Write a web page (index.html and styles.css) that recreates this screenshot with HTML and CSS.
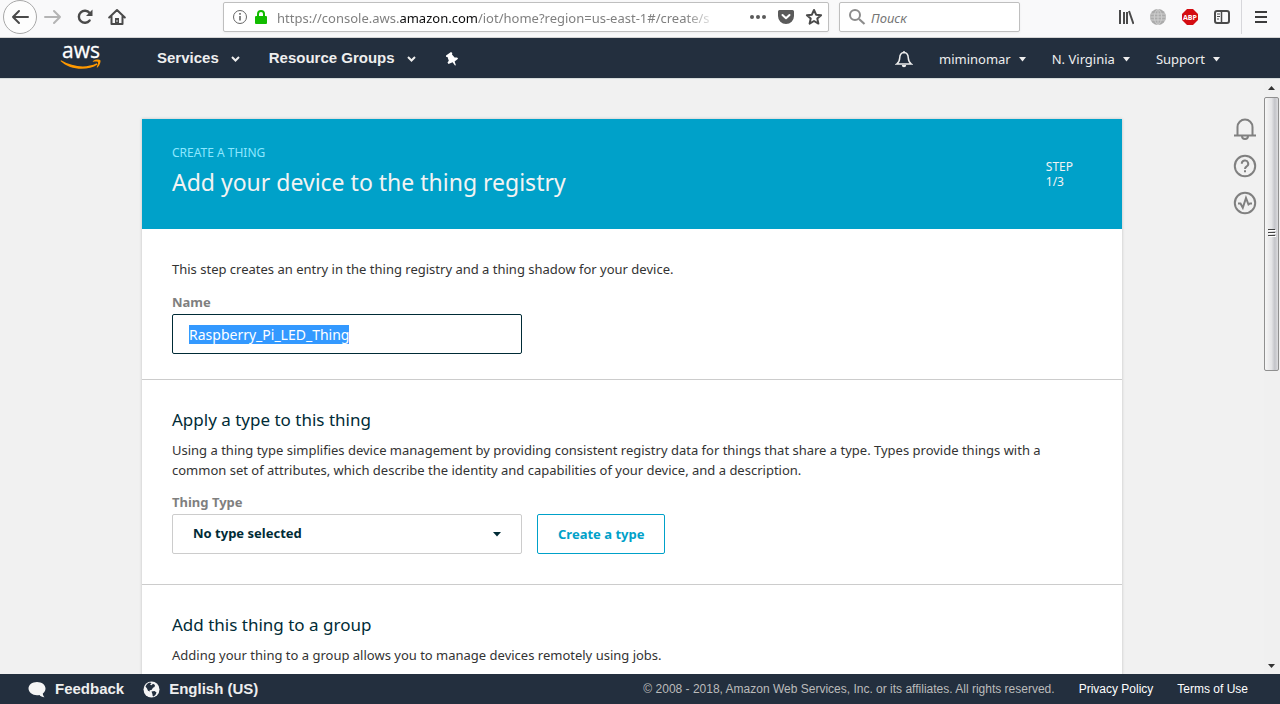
FILE: index.html
```html
<!DOCTYPE html>
<html lang="en">
<head>
<meta charset="utf-8">
<title>AWS IoT - Create a thing</title>
<link rel="stylesheet" href="styles.css">
</head>
<body>
<div class="toolbar">
  <div class="toolbar-nav">
    <button class="tool back" aria-label="Back"><svg width="18" height="18" viewBox="0 0 18 18"><path d="M17 9H2M8 3L2 9l6 6" class="stroke"/></svg></button>
    <button class="tool" aria-label="Forward"><svg width="18" height="18" viewBox="0 0 18 18"><path d="M1 9h15M10 3l6 6-6 6" class="stroke faded"/></svg></button>
    <button class="tool" aria-label="Reload"><svg width="18" height="18" viewBox="0 0 18 18"><path d="M13.6 12.4A6 6 0 1 1 13.6 5" class="stroke bold"/><path d="M16.500 1.500v6.500h-6.500z" fill="#4a4a4a"/></svg></button>
    <button class="tool" aria-label="Home"><svg width="18" height="18" viewBox="0 0 18 18"><path d="M1.200 9.500L9 2l7.800 7.500M3.500 8.500V16h11V8.500" class="stroke"/><path d="M7 16v-6h4v6z" fill="#4a4a4a"/><path d="M9 12v2" stroke="#ddd" stroke-width="1"/></svg></button>
  </div>
  <div class="urlbar">
    <svg width="16" height="16" viewBox="0 0 16 16"><circle cx="8" cy="8" r="6.500" fill="none" stroke="#666"/><path d="M8 7v4.500M8 4v1.800" stroke="#666" stroke-width="1.600"/></svg>
    <svg width="14" height="16" viewBox="0 0 14 16"><path d="M4 8V5a3 3 0 0 1 6 0v3" fill="none" stroke="#12bc00" stroke-width="2"/><rect x="1" y="7" width="12" height="8" rx="1" fill="#12bc00"/></svg>
    <div class="url" role="textbox" aria-label="Address" tabindex="0">https://console.aws.<span class="host">amazon.com</span>/iot/home?region=us-east-1#/create/s</div>
    <div class="url-actions">
      <button class="tool" aria-label="Page actions"><svg width="18" height="16" viewBox="0 0 18 16" fill="#5a5a5a"><circle cx="3" cy="8" r="2"/><circle cx="9" cy="8" r="2"/><circle cx="15" cy="8" r="2"/></svg></button>
      <button class="tool" aria-label="Save to Pocket"><svg width="18" height="16" viewBox="0 0 18 16"><path d="M2.500 1h13A1.500 1.500 0 0 1 17 2.500V7A8 8 0 0 1 1 7V2.500A1.500 1.500 0 0 1 2.500 1z" fill="#5a5a5a"/><path d="M5.500 6L9 9.300 12.500 6" fill="none" stroke="#fff" stroke-width="2" stroke-linecap="round" stroke-linejoin="round"/></svg></button>
      <button class="tool" aria-label="Bookmark"><svg width="18" height="18" viewBox="0 0 18 18"><path d="M9 2l2.100 4.700 5 .5-3.800 3.400 1.100 5L9 13l-4.400 2.600 1.100-5L1.900 7.200l5-.5z" class="stroke"/></svg></button>
    </div>
  </div>
  <label class="search">
    <svg width="18" height="18" viewBox="0 0 18 18"><circle cx="7" cy="7" r="5" fill="none" stroke="#8c8c8c" stroke-width="2"/><path d="M11 11l5.500 5" stroke="#8c8c8c" stroke-width="2.200"/></svg>
    <input type="text" placeholder="Поиск" aria-label="Поиск">
  </label>
  <div class="toolbar-end">
    <button class="tool" aria-label="Library"><svg width="16" height="16" viewBox="0 0 16 16"><path d="M2 1v14M6 3v12M9 3v12M11 2l4.500 13" stroke="#4a4a4a" stroke-width="2" fill="none"/></svg></button>
    <button class="tool" aria-label="Globe"><svg width="16" height="16" viewBox="0 0 16 16"><circle cx="8" cy="8" r="8" fill="#ababab"/><path d="M1 5h14M0 8h16M1 11h14M8 0v16M8 0c-5 4-5 12 0 16M8 0c5 4 5 12 0 16" stroke="#cfcfcf" fill="none"/></svg></button>
    <button class="tool" aria-label="Adblock Plus"><svg width="16" height="16" viewBox="0 0 16 16"><path d="M5 0h6l5 5v6l-5 5H5l-5-5V5z" fill="#d40d12"/><text x="8" y="11" class="abp">ABP</text></svg></button>
    <button class="tool" aria-label="Sidebar"><svg width="16" height="16" viewBox="0 0 16 16"><rect x="1" y="2" width="14" height="12" rx="2" fill="none" stroke="#4a4a4a" stroke-width="2"/><path d="M7.500 2v12" stroke="#4a4a4a" stroke-width="1.500"/><path d="M3 5h3M3 7.500h3M3 10h2" stroke="#4a4a4a"/></svg></button>
    <button class="tool menu" aria-label="Menu"><svg width="14" height="14" viewBox="0 0 14 14"><path d="M1 2h12M1 7h12M1 12h12" stroke="#3c3c3c" stroke-width="2"/></svg></button>
  </div>
</div>

<header class="awsbar">
  <a href="#" class="logo" aria-label="AWS home">
    <svg width="42" height="34" viewBox="0 -6 42 34"><text x="2" y="14" class="logo-text">aws</text><path d="M.5 17C10 26.500 28 27 37.500 20.500L36.800 19.300C26 24.500 13 23 1 16.300z" fill="#f90"/><path d="M32.800 17.200c3-2 6.600-1.900 7.600-1 .5 1.500-.5 5-3 7.300-.4.300-.8.100-.6-.4.700-1.700 1.600-4.300 1.200-5-.8-.700-3.300-.5-4.700-.3-.5 0-.7-.3-.5-.6z" fill="#f90"/></svg>
  </a>
  <nav class="mainnav">
    <button class="nav-main">Services <svg width="9" height="6" viewBox="0 0 9 6"><path d="M1 1l3.500 3.500L8 1" class="chev"/></svg></button>
    <button class="nav-main">Resource Groups <svg width="9" height="6" viewBox="0 0 9 6"><path d="M1 1l3.500 3.500L8 1" class="chev"/></svg></button>
    <button class="nav-main" aria-label="Pin shortcuts"><svg width="14" height="14" viewBox="0 0 14 14"><path d="M1 3.500L6 0l1.300 1-.3 1.600 2.600 3 2.500-.2 1 1.300-3.500 2.700 1.300 3.800-.9.200-2.400-3.200L3.500 12l-1-1.600 1.300-1.700L2.500 5 1.200 4.900z" fill="#fff"/></svg></button>
  </nav>
  <div class="account">
    <button class="nav-sub bell" aria-label="Notifications"><svg width="18" height="18" viewBox="0 0 18 18"><path d="M9 2.500c3.500.200 4.200 3 4.300 5.500.1 3 1 4.500 3 6H1.700c2-1.500 2.900-3 3-6C4.800 5.500 5.500 2.700 9 2.500zM9 1v2" fill="none" stroke="#eee" stroke-width="1.500"/><path d="M6.800 15h4.400a2.200 2.200 0 0 1-4.400 0z" fill="#eee"/></svg></button>
    <button class="nav-sub">miminomar <svg width="7" height="5" viewBox="0 0 7 5"><path d="M0 0h7L3.500 4.500z" fill="#eee"/></svg></button>
    <button class="nav-sub">N. Virginia <svg width="7" height="5" viewBox="0 0 7 5"><path d="M0 0h7L3.500 4.500z" fill="#eee"/></svg></button>
    <button class="nav-sub">Support <svg width="7" height="5" viewBox="0 0 7 5"><path d="M0 0h7L3.500 4.500z" fill="#eee"/></svg></button>
  </div>
</header>

<div class="viewport">
  <main class="page">
    <article class="card">
      <header class="banner">
        <div>
          <p class="eyebrow">CREATE A THING</p>
          <h1>Add your device to the thing registry</h1>
        </div>
        <p class="step">STEP<br>1/3</p>
      </header>
      <section class="section first">
        <p>This step creates an entry in the thing registry and a thing shadow for your device.</p>
        <label class="field-label" for="name">Name</label>
        <input class="name" id="name" type="text" value="Raspberry_Pi_LED_Thing" spellcheck="false" autofocus>
      </section>
      <section class="section">
        <h2>Apply a type to this thing</h2>
        <p>Using a thing type simplifies device management by providing consistent registry data for things that share a type. Types provide things with a common set of attributes, which describe the identity and capabilities of your device, and a description.</p>
        <label class="field-label" for="type">Thing Type</label>
        <div class="row">
          <select class="type" id="type"><option>No type selected</option></select>
          <button class="create">Create a type</button>
        </div>
      </section>
      <section class="section">
        <h2>Add this thing to a group</h2>
        <p>Adding your thing to a group allows you to manage devices remotely using jobs.</p>
      </section>
    </article>
    <aside class="helpers">
      <button class="tool" aria-label="Alerts"><svg width="24" height="24" viewBox="0 0 24 24" class="helper"><path d="M1 18.500h22M4.500 18.500V10a7.500 7.500 0 0 1 15 0v8.500M9 19a3 3 0 0 0 6 0"/></svg></button>
      <button class="tool" aria-label="Help"><svg width="24" height="24" viewBox="0 0 24 24" class="helper"><circle cx="12" cy="12" r="10.200"/><path d="M8.800 9.800a3.200 3.200 0 1 1 4.800 2.700c-1.100.600-1.600 1.100-1.600 2.500M12 16.200v2"/></svg></button>
      <button class="tool" aria-label="Activity"><svg width="24" height="24" viewBox="0 0 24 24" class="helper"><circle cx="12" cy="12" r="10.200"/><path d="M5 12.500h2.500l2.300 4.300L13 7l2.500 6.500 1.500-1h2"/></svg></button>
    </aside>
  </main>
  <div class="scrollbar" aria-hidden="true">
    <svg width="16" height="18" viewBox="0 0 16 18"><path d="M4 11l3.500-4 3.500 4z" fill="#333"/></svg>
    <div class="track"><div class="thumb"><svg width="8" height="9" viewBox="0 0 8 9"><path d="M0 .5h7M0 3.500h7M0 6.500h7" stroke="#444"/><path d="M1 1.500h7M1 4.500h7M1 7.500h7" stroke="#fff"/></svg></div></div>
    <svg width="16" height="18" viewBox="0 0 16 18"><path d="M4 8h7l-3.500 4z" fill="#333"/></svg>
  </div>
</div>

<footer class="footer">
  <div class="footer-start">
    <button class="foot-main"><svg width="18" height="17" viewBox="0 0 18 17"><path d="M9 1c4.700 0 8.500 2.800 8.500 6.500 0 2-1 3.700-2.700 5 .1 1.700.7 2.700 1.700 3.800-2.200-.1-4-1-5-2.300-.8.100-1.600.200-2.500.200C4.300 14.200.500 11.200.500 7.500S4.300 1 9 1z" fill="#f5f5f5"/></svg>Feedback</button>
    <button class="foot-main"><svg width="17" height="17" viewBox="0 0 17 17"><circle cx="8.500" cy="8.500" r="8" fill="#f5f5f5"/><path d="M2.500 5.500C3.500 3 5 2 7 1.500l1.500.8-1.500 1.200 1.500.8 1.500-1.500 2 1.200-.5 2-1.500.7-1.500 2.300-2 .2L7 10.500l-2-.8-1-2.200zM8.500 10.500l3-.5 2 1.500-.8 2-2 2-1-.5-.3-2z" fill="#232f3e"/></svg>English (US)</button>
  </div>
  <div class="legal">
    <span class="copyright">© 2008 - 2018, Amazon Web Services, Inc. or its affiliates. All rights reserved.</span>
    <a href="#">Privacy Policy</a>
    <a href="#">Terms of Use</a>
  </div>
</footer>
<script src="app.js"></script>
</body>
</html>
```
FILE: app.js
```js
const nameField = document.getElementById('name');
nameField.focus();
nameField.select();
```
FILE: styles.css
```css
* { box-sizing: border-box; }
body { margin: 0; height: 100vh; display: flex; flex-direction: column; font: 13px/20px "Noto Sans", sans-serif; color: #333; background: #f1f1f1; overflow: hidden; }
button, input, select { font: inherit; color: inherit; margin: 0; }
button { border: 0; padding: 0; background: none; cursor: pointer; }
svg { display: block; flex: none; }
p, h1, h2 { margin: 0; font-weight: 400; }

/* Browser toolbar */
.toolbar { flex: none; display: flex; align-items: flex-start; height: 38px; background: #f9f9fa; border-bottom: 1px solid #d4d4d4; }
.toolbar-nav { display: flex; align-items: center; gap: 14px; width: 223px; height: 34px; padding-left: 3px; }
.tool { display: flex; align-items: center; justify-content: center; }
.back { width: 34px; height: 34px; border: 1px solid #a8a8a8; border-radius: 50%; background: #fdfdfd; margin-right: -7px; }
.stroke { fill: none; stroke: #4a4a4a; stroke-width: 2; stroke-linejoin: round; stroke-linecap: round; }
.faded { stroke: #b4b4b4; }
.bold { stroke-width: 2.4; }
.urlbar, .search { display: flex; align-items: center; height: 30px; margin-top: 2px; background: #fff; border: 1px solid #bfbfbf; border-radius: 2px; box-shadow: 0 1px 3px #0000000d; }
.urlbar { flex: 1; min-width: 0; padding: 0 5px 0 8px; gap: 6px; }
.url { flex: 1; min-width: 0; margin-left: 3px; padding-top: 2px; overflow: hidden; white-space: nowrap; color: #808080; outline: 0; -webkit-mask-image: linear-gradient(to left, transparent, #000 32px); mask-image: linear-gradient(to left, transparent, #000 32px); }
.host { color: #0c0c0d; }
.url-actions { display: flex; gap: 10px; margin-left: 26px; }
.search { width: 181px; margin-left: 10px; padding: 0 8px; gap: 4px; }
.search input { flex: 1; min-width: 0; border: 0; padding: 1px 0 0 1px; outline: 0; background: none; }
.search input::placeholder { color: #757575; font-style: italic; opacity: 1; }
.toolbar-end { display: flex; align-items: center; gap: 16px; height: 34px; margin-left: 98px; }
.menu { height: 34px; padding: 0 12px; border-left: 1px solid #d7d7db; margin-left: -5px; }
.abp { font: bold 7px "Open Sans", sans-serif; fill: #fff; text-anchor: middle; }

/* Console header */
.awsbar { flex: none; display: flex; align-items: center; height: 41px; padding: 0 60px; background: #232f3e; border-bottom: 1px solid #d5dbdb; color: #eee; }
.logo { padding-bottom: 6px; }
.logo-text { font: 21px "Open Sans", sans-serif; fill: #fff; stroke: #fff; stroke-width: .3; }
.mainnav { display: flex; margin-left: 55px; gap: 29px; }
.nav-main, .nav-sub { display: flex; align-items: center; height: 40px; }
.nav-main { gap: 12px; font: bold 15px/20px "Liberation Sans", sans-serif; }
.nav-main > svg { margin-top: 1px; }
.chev { fill: none; stroke: #eee; stroke-width: 2; }
.account { display: flex; gap: 26px; margin-left: auto; }
.nav-sub { gap: 8px; padding-top: 2px; }

/* Scrolling region */
.viewport { flex: 1; min-height: 0; display: flex; }
.page { flex: 1; min-width: 0; position: relative; overflow: hidden; padding: 40px 24px 0; }
.card { max-width: 980px; margin: 0 auto; background: #fff; box-shadow: 0 0 3px #0003; }
.banner { display: flex; justify-content: space-between; align-items: center; padding: 24px 49px 27px 30px; background: #00a1c9; color: #f3f3f3; }
.eyebrow { font-size: 12px; color: #8de7ff; }
h1 { font-size: 23px; line-height: 39px; }
.step { font-size: 12px; line-height: 15px; padding-top: 2px; }
.section { padding: 25px 30px 30px; border-bottom: 1px solid #ccc; }
.first { padding: 30px 30px 25px; }
h2 { font-size: 17px; line-height: 30px; margin-bottom: 5px; color: #002b36; }
.field-label { display: block; margin: 12px 0 2px; font-weight: 700; color: #7f7f7f; line-height: 20px; }
.name, .type { display: block; width: 350px; height: 40px; border-radius: 2px; background-color: #fff; }
.first .field-label { margin-top: 13px; }
.name { padding: 0 16px; border: 1px solid #002b36; outline: 0; font-size: 14px; }
.name::selection { background: #39f; color: #fff; }
.row { display: flex; gap: 15px; }
.type { appearance: none; padding: 0 20px 2px; border: 1px solid #ccc; font-weight: 700; color: #002b36; background-image: url("data:image/svg+xml,%3Csvg xmlns='http://www.w3.org/2000/svg' width='8' height='5'%3E%3Cpath d='M0 0h8L4 4.500z' fill='%23002b36'/%3E%3C/svg%3E"); background-repeat: no-repeat; background-position: right 20px center; }
.create { padding: 0 20px; border: 1px solid #00a1c9; border-radius: 2px; font-weight: 700; color: #00a1c9; }
.helpers { position: absolute; top: 38px; right: 7px; display: flex; flex-direction: column; gap: 13px; }
.helper { fill: none; stroke: #808080; stroke-width: 2; }

.scrollbar { flex: none; width: 16px; display: flex; flex-direction: column; background: #f0f0f0; }
.track { flex: 1; min-height: 0; padding-right: 1px; }
.thumb { height: 49%; display: flex; align-items: center; justify-content: center; border: 1px solid #8f8f8f; border-radius: 2px; background: linear-gradient(to right, #f6f6f6, #e4e4e6 50%, #c3c4c9 75%, #dcdcdf); }

/* Footer */
.footer { flex: none; display: flex; align-items: center; justify-content: space-between; height: 30px; padding: 0 32px 0 28px; background: #232f3e; color: #eee; font-family: "Liberation Sans", sans-serif; }
.footer-start { display: flex; gap: 19px; }
.foot-main { display: flex; align-items: center; gap: 9px; font-size: 15px; font-weight: 700; }
.legal { display: flex; gap: 24px; font-size: 12px; }
.legal a { color: #fff; text-decoration: none; }
.copyright { color: #bbb; }
```
